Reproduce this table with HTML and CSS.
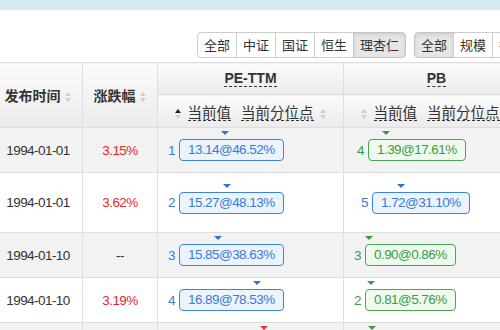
FILE: index.html
```html
<!DOCTYPE html>
<html lang="zh">
<head>
<meta charset="utf-8">
<title>估值</title>
<link rel="stylesheet" href="styles.css">
</head>
<body>
<div class="topband"></div>
<div class="toolbar">
  <div class="btn-group">
    <button class="btn">全部</button>
    <button class="btn">中证</button>
    <button class="btn">国证</button>
    <button class="btn">恒生</button>
    <button class="btn active">理杏仁</button>
  </div>
  <div class="btn-group">
    <button class="btn active">全部</button>
    <button class="btn">规模</button>
    <button class="btn">行业</button>
  </div>
</div>
<div class="table-wrap">
<table class="grid">
  <colgroup>
    <col class="c-date"><col class="c-chg"><col class="c-metric"><col class="c-metric">
  </colgroup>
  <thead>
    <tr class="hr1">
      <th rowspan="2" class="hmain">发布时间<span class="sort"></span></th>
      <th rowspan="2" class="hmain">涨跌幅<span class="sort"></span></th>
      <th class="hgroup"><span class="dotted">PE-TTM</span></th>
      <th class="hgroup"><span class="dotted">PB</span></th>
    </tr>
    <tr class="hr2">
      <th class="hsub"><span class="sort asc"></span><span class="dotted">当前值</span><span class="dotted">当前分位点</span><span class="sort"></span></th>
      <th class="hsub"><span class="sort"></span><span class="dotted">当前值</span><span class="dotted">当前分位点</span><span class="sort"></span></th>
    </tr>
  </thead>
  <tbody>
    <tr class="r odd">
      <td class="date">1994-01-01</td>
      <td class="chg up">3.15%</td>
      <td class="val"><span class="idx blue">1</span><span class="tag blue"><i class="tri" style="--p:46.52"></i>13.14@46.52%</span></td>
      <td class="val ind3"><span class="idx green">4</span><span class="tag green"><i class="tri" style="--p:17.61"></i>1.39@17.61%</span></td>
    </tr>
    <tr class="r tall">
      <td class="date">1994-01-01</td>
      <td class="chg up">3.62%</td>
      <td class="val"><span class="idx blue">2</span><span class="tag blue"><i class="tri" style="--p:48.13"></i>15.27@48.13%</span></td>
      <td class="val ind7"><span class="idx blue">5</span><span class="tag blue"><i class="tri" style="--p:29.5"></i>1.72@31.10%</span></td>
    </tr>
    <tr class="r odd">
      <td class="date">1994-01-10</td>
      <td class="chg">--</td>
      <td class="val"><span class="idx blue">3</span><span class="tag blue"><i class="tri" style="--p:38.63"></i>15.85@38.63%</span></td>
      <td class="val"><span class="idx green">3</span><span class="tag green"><i class="tri" style="--p:0.86"></i>0.90@0.86%</span></td>
    </tr>
    <tr class="r">
      <td class="date">1994-01-10</td>
      <td class="chg up">3.19%</td>
      <td class="val"><span class="idx blue">4</span><span class="tag blue"><i class="tri" style="--p:78.53"></i>16.89@78.53%</span></td>
      <td class="val"><span class="idx green">2</span><span class="tag green"><i class="tri" style="--p:5.76"></i>0.81@5.76%</span></td>
    </tr>
    <tr class="r odd">
      <td class="date">1994-01-17</td>
      <td class="chg up">2.02%</td>
      <td class="val"><span class="idx red">5</span><span class="tag red"><i class="tri" style="--p:85.2"></i>17.25@85.20%</span></td>
      <td class="val"><span class="idx green">1</span><span class="tag green"><i class="tri" style="--p:6.9"></i>0.83@6.90%</span></td>
    </tr>
  </tbody>
</table>
</div>
</body>
</html>
```

FILE: styles.css
```css
html, body {
  margin: 0;
  padding: 0;
}
body {
  width: 500px;
  height: 330px;
  overflow: hidden;
  background: #fff;
  color: #333;
  font-family: "Liberation Sans", "Noto Sans CJK SC", sans-serif;
}
.topband {
  height: 10px;
  background: #d3ebef;
}
.toolbar {
  display: flex;
  gap: 8px;
  margin: 22px 0 0 197px;
  height: 26px;
  white-space: nowrap;
}
.btn-group {
  display: flex;
}
.btn {
  height: 26px;
  margin: 0 0 0 -1px;
  padding: 0 6px;
  border: 1px solid #ccc;
  background: #fff;
  color: #333;
  font-family: "Noto Sans CJK SC", sans-serif;
  font-size: 13px;
  line-height: 24px;
  border-radius: 0;
}
.btn-group .btn:first-child {
  margin-left: 0;
  border-radius: 4px 0 0 4px;
}
.btn-group .btn:last-child {
  border-radius: 0 4px 4px 0;
}
.btn.active {
  background: #e6e6e6;
  border-color: #c4c4c4;
  box-shadow: inset 0 2px 4px rgba(0,0,0,0.10);
}
.table-wrap {
  margin-top: 4px;
  margin-left: -7px;
  width: 560px;
}
.grid {
  border-collapse: collapse;
  table-layout: fixed;
  width: 536px;
}
.c-date { width: 89px; }
.c-chg { width: 75px; }
.c-metric { width: 186px; }
.grid th, .grid td {
  border: 1px solid #dedede;
  padding: 0;
  white-space: nowrap;
  overflow: hidden;
}
.grid thead th {
  background: linear-gradient(#fbfbfb, #ebebeb);
  font-family: "Noto Sans CJK SC", sans-serif;
  font-size: 14px;
  color: #333;
  vertical-align: middle;
}
.hr1 { height: 32px; }
.hr2 { height: 33px; }
.hmain {
  font-weight: bold;
  text-align: center;
}
.grid thead th.hgroup {
  font-family: "Liberation Sans", sans-serif;
  font-weight: bold;
  font-size: 14px;
}
.grid thead th.hsub {
  font-weight: normal;
  font-size: 14.5px;
  text-align: center;
}
.dotted {
  border-bottom: 1px dashed #333;
  line-height: 16px;
  display: inline-block;
}
.hsub .dotted {
  margin: 0 5px;
}
.sort {
  display: inline-block;
  width: 7px;
  height: 10px;
  margin-left: 4px;
  vertical-align: -1px;
  position: relative;
}
.sort::before, .sort::after {
  content: "";
  position: absolute;
  left: 0;
  border-left: 3.5px solid transparent;
  border-right: 3.5px solid transparent;
}
.sort::before {
  top: 0;
  border-bottom: 4px solid #cfcfcf;
}
.sort::after {
  bottom: 0;
  border-top: 4px solid #cfcfcf;
}
.sort.asc::before {
  border-bottom-color: #222;
}
.hsub .sort { margin: 0 1px; }
.r { height: 45px; background: #fff; }
.r.odd { background: #f2f2f2; }
.r.tall { height: 60px; }
.grid td {
  font-family: "Liberation Sans", sans-serif;
  font-size: 13.5px;
  letter-spacing: -0.55px;
  vertical-align: middle;
}
.date {
  text-align: center;
  color: #333;
}
.chg {
  text-align: center;
  color: #333;
}
.chg.up { color: #e0282e; }
.val {
  text-align: left;
}
.grid td.val { padding-left: 10px; }
.grid td.val.ind3 { padding-left: 13px; }
.grid td.val.ind7 { padding-left: 17px; }
.idx {
  display: inline-block;
  vertical-align: middle;
  margin-right: 4px;
}
.tag {
  position: relative;
  display: inline-block;
  vertical-align: middle;
  height: 22px;
  box-sizing: border-box;
  line-height: 20px;
  padding: 0 8px 0 8px;
  border: 1px solid;
  border-radius: 4px;
}
.tri {
  position: absolute;
  top: -9px;
  left: max(4px, calc(var(--p) * 1px));
  margin-left: -5px;
  width: 0;
  height: 0;
  border-left: 4px solid transparent;
  border-right: 4px solid transparent;
  border-top: 4px solid currentColor;
}
.blue { color: #3a7bd5; }
.tag.blue { border-color: #3f82dc; background: #ebf3fd; }
.green { color: #3c9a45; }
.tag.green { border-color: #4ca555; background: #effaef; }
.red { color: #e0343a; }
.tag.red { border-color: #e0343a; background: #fdeeee; }
.tag.blue .tri { border-top-color: #2f74d0; }
.tag.green .tri { border-top-color: #3c9a45; }
.tag.red .tri { border-top-color: #e0343a; }
```
